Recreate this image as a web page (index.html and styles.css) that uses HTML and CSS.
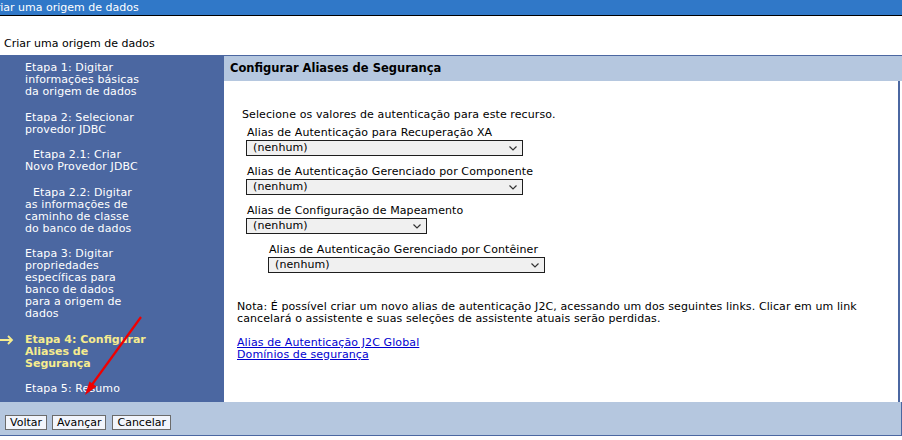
FILE: index.html
```html
<!DOCTYPE html>
<html lang="pt-BR">
<head>
<meta charset="utf-8">
<title>Criar uma origem de dados</title>
<link rel="stylesheet" href="styles.css">
</head>
<body>
<div class="titlebar"><span class="titlebar-text">Criar uma origem de dados</span></div>
<div class="pagehead">Criar uma origem de dados</div>
<div class="wizard">
  <nav class="steps">
    <div class="step">Etapa 1: Digitar<br>informações básicas<br>da origem de dados</div>
    <div class="step">Etapa 2: Selecionar<br>provedor JDBC</div>
    <div class="step sub">Etapa 2.1: Criar<br>Novo Provedor JDBC</div>
    <div class="step sub">Etapa 2.2: Digitar<br>as informações de<br>caminho de classe<br>do banco de dados</div>
    <div class="step">Etapa 3: Digitar<br>propriedades<br>específicas para<br>banco de dados<br>para a origem de<br>dados</div>
    <div class="step current"><svg class="current-arrow" width="14" height="10" viewBox="0 0 14 10"><path d="M0 5H12M8 1L12 5L8 9" fill="none" stroke="#f6ec8e" stroke-width="1.8"/></svg>Etapa 4: Configurar<br>Aliases de<br>Segurança</div>
    <div class="step">Etapa 5: Resumo</div>
  </nav>
  <main class="panel">
    <div class="panel-head">Configurar Aliases de Segurança</div>
    <div class="panel-body">
      <p class="intro">Selecione os valores de autenticação para este recurso.</p>
      <div class="field">
        <label class="field-label">Alias de Autenticação para Recuperação XA</label>
        <span class="select-wrap wide"><select class="select"><option>(nenhum)</option></select><svg class="chev" width="8" height="5" viewBox="0 0 8 5"><path d="M0.5 0.5L4 4L7.5 0.5" fill="none" stroke="#333" stroke-width="1.2"/></svg></span>
      </div>
      <div class="field">
        <label class="field-label">Alias de Autenticação Gerenciado por Componente</label>
        <span class="select-wrap wide"><select class="select"><option>(nenhum)</option></select><svg class="chev" width="8" height="5" viewBox="0 0 8 5"><path d="M0.5 0.5L4 4L7.5 0.5" fill="none" stroke="#333" stroke-width="1.2"/></svg></span>
      </div>
      <div class="field">
        <label class="field-label">Alias de Configuração de Mapeamento</label>
        <span class="select-wrap narrow"><select class="select"><option>(nenhum)</option></select><svg class="chev" width="8" height="5" viewBox="0 0 8 5"><path d="M0.5 0.5L4 4L7.5 0.5" fill="none" stroke="#333" stroke-width="1.2"/></svg></span>
      </div>
      <div class="field nested">
        <label class="field-label">Alias de Autenticação Gerenciado por Contêiner</label>
        <span class="select-wrap wide"><select class="select"><option>(nenhum)</option></select><svg class="chev" width="8" height="5" viewBox="0 0 8 5"><path d="M0.5 0.5L4 4L7.5 0.5" fill="none" stroke="#333" stroke-width="1.2"/></svg></span>
      </div>
      <p class="note">Nota: É possível criar um novo alias de autenticação J2C, acessando um dos seguintes links. Clicar em um link<br>cancelará o assistente e suas seleções de assistente atuais serão perdidas.</p>
      <div class="links">
        <a href="#" class="link">Alias de Autenticação J2C Global</a><br>
        <a href="#" class="link">Domínios de segurança</a>
      </div>
    </div>
  </main>
  <div class="actions">
    <button class="btn">Voltar</button>
    <button class="btn">Avançar</button>
    <button class="btn btn-cancel">Cancelar</button>
  </div>
</div>
<svg class="annotation" width="902" height="440" viewBox="0 0 902 440">
  <line x1="141" y1="317" x2="91" y2="386" stroke="#f00000" stroke-width="2.2"/>
  <polygon points="85,395 96.5,386.5 89.5,381.5" fill="#f00000"/>
</svg>
</body>
</html>
```
FILE: styles.css
```css
html, body {
  margin: 0;
  padding: 0;
  background: #ffffff;
}
body {
  width: 902px;
  height: 440px;
  overflow: hidden;
  position: relative;
  font-family: "DejaVu Sans", Verdana, sans-serif;
  font-size: 11px;
  letter-spacing: 0.1px;
  color: #000;
}
.titlebar {
  height: 15px;
  background: #3078c8;
  border-bottom: 1px solid #000;
  overflow: hidden;
  white-space: nowrap;
}
.titlebar-text {
  display: block;
  margin-left: -12px;
  color: #fff;
  font-size: 11px;
  letter-spacing: 0;
  line-height: 15px;
}
.pagehead {
  box-sizing: border-box;
  height: 39px;
  padding: 22px 0 0 4px;
  font-size: 11px;
  letter-spacing: 0;
  line-height: 12px;
}
.wizard {
  box-sizing: border-box;
  width: 902px;
  display: grid;
  grid-template-columns: 224px 1fr;
  grid-template-rows: 346px 33px;
  border-top: 1px solid #4b67a1;
  border-bottom: 1px solid #4b67a1;
}
.steps {
  background: #4b67a1;
  padding: 6px 0 0 25px;
  display: flex;
  flex-direction: column;
  gap: 13.5px;
  color: #fff;
  line-height: 12px;
  white-space: nowrap;
}
.step {
  position: relative;
}
.step.sub {
  text-indent: 8px;
}
.step.current {
  color: #f6ec8e;
  font-weight: bold;
  letter-spacing: 0;
}
.current-arrow {
  position: absolute;
  left: -25px;
  top: 1px;
}
.panel {
  display: flex;
  flex-direction: column;
  background: #fff;
}
.panel-head {
  height: 25px;
  background: #b5c7df;
  padding-left: 6px;
  font-weight: bold;
  font-size: 11.5px;
  letter-spacing: 0;
  line-height: 25px;
}
.panel-body {
  flex: 1;
  padding: 28px 0 0 18px;
  margin-right: 2px;
  border-right: 2px solid #4b67a1;
}
.intro {
  margin: 0;
  line-height: 12px;
}
.field {
  margin: 6px 0 0 4px;
  display: flex;
  flex-direction: column;
  align-items: flex-start;
}
.field + .field {
  margin-top: 10px;
}
.field.nested {
  margin-left: 26px;
}
.field-label {
  padding-left: 1px;
  line-height: 12px;
}
.select-wrap {
  position: relative;
  display: block;
  margin-top: 1px;
  height: 16px;
}
.select-wrap.wide { width: 277px; }
.select-wrap.narrow { width: 181px; }
.select {
  -webkit-appearance: none;
  appearance: none;
  box-sizing: border-box;
  width: 100%;
  height: 16px;
  margin: 0;
  padding: 0 0 0 6px;
  border: 1px solid #1e1e1e;
  border-radius: 0;
  background: #f0f0f0;
  font-family: "DejaVu Sans", Verdana, sans-serif;
  font-size: 11px;
  letter-spacing: 0.1px;
  line-height: 14px;
  color: #000;
}
.chev {
  position: absolute;
  right: 6px;
  top: 6px;
  pointer-events: none;
}
.note {
  margin: 28px 0 0 -5px;
  line-height: 12px;
  white-space: nowrap;
}
.links {
  margin: 12px 0 0 -5px;
  line-height: 12px;
}
.link {
  color: #0000d0;
  text-decoration: underline;
}
.actions {
  grid-column: 1 / 3;
  background: #b5c7df;
  border-right: 1px solid #4b67a1;
  display: flex;
  align-items: flex-start;
  gap: 5px;
  padding: 13px 0 0 5px;
}
.btn {
  box-sizing: border-box;
  height: 15px;
  margin: 0;
  padding: 0 4px;
  border: 1px solid #6b6b6b;
  border-radius: 0;
  background: #f2f5fc;
  font-family: "DejaVu Sans", Verdana, sans-serif;
  font-size: 11px;
  letter-spacing: 0;
  line-height: 13px;
  color: #000;
}
.btn-cancel {
  margin-left: 1px;
}
.annotation {
  position: absolute;
  left: 0;
  top: 0;
  pointer-events: none;
}
```
